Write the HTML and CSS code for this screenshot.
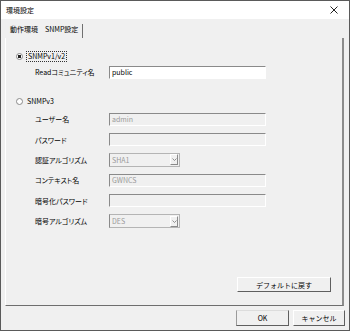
FILE: index.html
```html
<!DOCTYPE html>
<html lang="ja">
<head>
    <meta charset="UTF-8">
    <title>環境設定</title>
    <link rel="stylesheet" href="styles.css">
</head>
<body>
    <div class="window">
        <div class="titlebar">
            <span class="title">環境設定</span>
            <span class="close">
                <svg width="8" height="8" viewBox="0 0 8 8"><path d="M0.5 0.5L7.5 7.5M7.5 0.5L0.5 7.5" stroke="#222" stroke-width="1"/></svg>
            </span>
        </div>
        <div class="tabs">
            <span class="tab">動作環境</span>
            <span class="tab active">SNMP設定</span>
        </div>
        <div class="panel">
            <div class="radio-row">
                <span class="radio checked"></span>
                <span class="focus">SNMPv1/v2</span>
            </div>
            <div class="field first">
                <span class="label">Readコミュニティ名</span>
                <span class="input">public</span>
            </div>
            <div class="radio-row v3">
                <span class="radio"></span>
                <span>SNMPv3</span>
            </div>
            <div class="group">
                <div class="field">
                    <span class="label">ユーザー名</span>
                    <span class="input disabled">admin</span>
                </div>
                <div class="field">
                    <span class="label">パスワード</span>
                    <span class="input disabled"></span>
                </div>
                <div class="field">
                    <span class="label">認証アルゴリズム</span>
                    <span class="select">SHA1<span class="arrow"><svg width="5" height="3" viewBox="0 0 5 3"><path d="M0.5 0.5L2.5 2.5L4.5 0.5" fill="none" stroke="#777" stroke-width="0.8"/></svg></span></span>
                </div>
                <div class="field">
                    <span class="label">コンテキスト名</span>
                    <span class="input disabled">GWNCS</span>
                </div>
                <div class="field">
                    <span class="label">暗号化パスワード</span>
                    <span class="input disabled"></span>
                </div>
                <div class="field">
                    <span class="label">暗号アルゴリズム</span>
                    <span class="select">DES<span class="arrow"><svg width="5" height="3" viewBox="0 0 5 3"><path d="M0.5 0.5L2.5 2.5L4.5 0.5" fill="none" stroke="#777" stroke-width="0.8"/></svg></span></span>
                </div>
            </div>
            <button class="btn reset">デフォルトに戻す</button>
        </div>
        <div class="footer">
            <button class="btn ok">OK</button>
            <button class="btn cancel">キャンセル</button>
        </div>
    </div>
</body>
</html>
```

FILE: styles.css
```css
body {
    margin: 0;
    font-family: "Noto Sans CJK JP", "Noto Sans", sans-serif;
    font-feature-settings: "palt";
    font-size: 7px;
    color: #000;
}

.window {
    width: 350px;
    height: 331px;
    box-sizing: border-box;
    border: 1px solid #5a5a5a;
    background-color: #f0f0f0;
    display: flex;
    flex-direction: column;
}

.titlebar {
    height: 18px;
    background-color: #fff;
    display: flex;
    align-items: center;
    justify-content: space-between;
    padding: 0 11px 0 5px;
}

.close {
    display: flex;
}

.tabs {
    height: 19px;
    box-sizing: border-box;
    padding: 5px 0 0 4px;
    display: flex;
}

.tab {
    height: 14px;
    line-height: 10px;
    padding: 0 5px;
}

.tab.active {
    padding: 0 4px 0 2px;
    border-right: 1px solid #707070;
}

.panel {
    height: 268px;
    box-sizing: border-box;
    margin: 0 5px 0 4px;
    padding-top: 11px;
    border-left: 1px solid #fff;
    border-right: 2px solid #8c8c8c;
    border-bottom: 1px solid #6e6e6e;
    display: flex;
    flex-direction: column;
}

.radio-row {
    height: 14px;
    display: flex;
    align-items: center;
    padding-left: 10px;
    gap: 4px;
}

.radio-row.v3 {
    margin-top: 13px;
}

.radio {
    width: 5px;
    height: 5px;
    border: 1px solid #8a8a8a;
    border-radius: 50%;
    background-color: #fff;
}

.radio.checked {
    background: radial-gradient(circle, #222 0 1.6px, #fff 1.8px);
}

.focus {
    outline: 1px dotted #333;
    line-height: 9px;
    padding: 0 1px;
}

.group {
    margin-top: 1px;
}

.field {
    height: 20.4px;
    display: flex;
    align-items: center;
    padding-left: 29px;
}

.field.first {
    height: 18px;
}

.label {
    width: 74px;
}

.input {
    width: 153px;
    height: 11px;
    line-height: 11px;
    padding-left: 2px;
    background-color: #fff;
    border-top: 1px solid #8a8a8a;
    border-left: 1px solid #8a8a8a;
    border-bottom: 1px solid #fff;
    border-right: 1px solid #fff;
}

.input.disabled {
    background-color: #f0f0f0;
    color: #9a9a9a;
}

.select {
    width: 67px;
    height: 12px;
    line-height: 12px;
    box-sizing: content-box;
    padding-left: 2px;
    margin-right: auto;
    border: 1px solid #b4b4b4;
    border-left-color: #8a8a8a;
    color: #9a9a9a;
    display: flex;
    justify-content: space-between;
    align-items: center;
}

.arrow {
    width: 6px;
    height: 9px;
    margin-right: 1px;
    border-right: 1px solid #8a8a8a;
    border-bottom: 1px solid #8a8a8a;
    border-top: 1px solid #fff;
    border-left: 1px solid #fff;
    display: flex;
    align-items: center;
    justify-content: center;
}

.btn {
    font-family: inherit;
    font-size: 7px;
    color: #000;
    background-color: #f0f0f0;
    padding: 0;
    border: 1px solid;
    border-color: #fff #5f5f5f #5f5f5f #fff;
}

.reset {
    width: 94px;
    height: 15px;
    margin-top: auto;
    margin-right: 11px;
    margin-bottom: 13px;
    align-self: flex-end;
}

.footer {
    display: flex;
    justify-content: flex-end;
    gap: 4px;
    padding: 4px 4px 0 0;
}

.ok {
    width: 53px;
    height: 16px;
    border-color: #dcdcdc #5f5f5f #5f5f5f #9a9a9a;
}

.cancel {
    width: 52px;
    height: 16px;
}
```
